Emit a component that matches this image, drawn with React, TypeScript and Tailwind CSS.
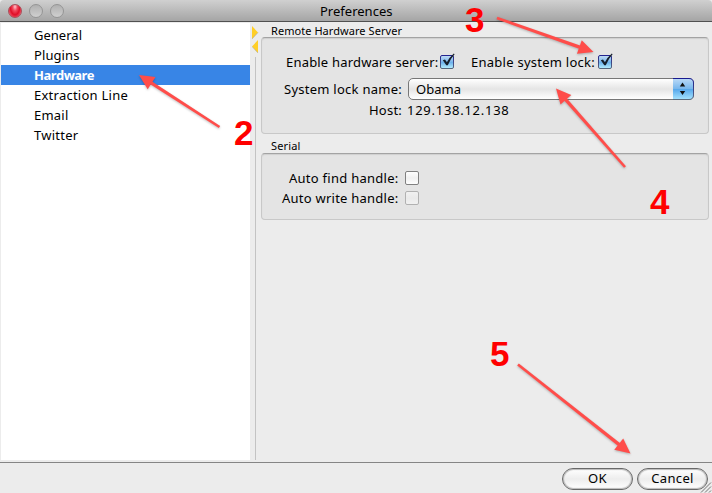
import { useLayoutEffect, useRef, useState } from "react";

const FONT = "font-['Noto_Sans','Open_Sans',sans-serif]";

// Text tracked so that it fills a given width.
function Label({ text, width, className = "" }: { text: string; width: number; className?: string }) {
  const ref = useRef<HTMLSpanElement>(null);
  const [tracking, setTracking] = useState(0);
  useLayoutEffect(() => {
    if (ref.current) {
      const natural = ref.current.getBoundingClientRect().width;
      setTracking((width - natural) / text.length);
    }
  }, [text, width]);
  return (
    <span className={className}>
      <span ref={ref} className="inline-block whitespace-nowrap" style={{ letterSpacing: `${tracking}px` }}>
        {text}
      </span>
    </span>
  );
}

const sections = [
  { name: "General", width: 48 },
  { name: "Plugins", width: 45.5 },
  { name: "Hardware", width: 60 },
  { name: "Extraction Line", width: 94 },
  { name: "Email", width: 34.5 },
  { name: "Twitter", width: 44.5 },
];

function Checkbox({ checked = false, disabled = false }: { checked?: boolean; disabled?: boolean }) {
  return (
    <svg className={`block h-[20px] w-[18px] shrink-0 ${disabled ? "opacity-50" : ""}`} viewBox="0 1 18 20">
      <defs>
        <linearGradient id="boxOn" x1="0" y1="0" x2="0" y2="1">
          <stop offset="0" stopColor="#c3ddf5" />
          <stop offset="0.45" stopColor="#83bbee" />
          <stop offset="0.5" stopColor="#68aeea" />
          <stop offset="1" stopColor="#b8f0ff" />
        </linearGradient>
        <linearGradient id="boxOff" x1="0" y1="0" x2="0" y2="1">
          <stop offset="0" stopColor="#ffffff" />
          <stop offset="0.5" stopColor="#f0f0f0" />
          <stop offset="1" stopColor="#ffffff" />
        </linearGradient>
        <linearGradient id="boxEdge" x1="0" y1="0" x2="0" y2="1">
          <stop offset="0" stopColor="#24248f" />
          <stop offset="1" stopColor="#56667c" />
        </linearGradient>
      </defs>
      <rect x="0.5" y="4.5" width="13" height="13" rx="1.5" fill={checked ? "url(#boxOn)" : "url(#boxOff)"} stroke={checked ? "url(#boxEdge)" : "#808080"} />
      {checked && <path d="M2.8 9.300 5 8.600 6.900 11.300Q9.500 6 13.800 2.400L14.600 3.200Q10.200 8 7.800 14.200H6.300Z" fill="#16202c" />}
    </svg>
  );
}

function Group({ title, width, className, children }: { title: string; width: number; className: string; children: React.ReactNode }) {
  return (
    <section>
      <h2 className="flex h-[15px] items-center pl-[10px] text-[11px] leading-[15px]">
        <Label text={title} width={width} />
      </h2>
      <div className={`rounded-[4px] border border-[#c8c8c8] border-t-[#a3a3a3] bg-[#e4e4e4] shadow-[inset_0_1px_1px_#cfcfcf] ${className}`}>{children}</div>
    </section>
  );
}

function PushButton({ text, width }: { text: string; width: number }) {
  return (
    <button className="flex h-[22px] w-[71px] items-center justify-center rounded-full border border-[#686868] bg-linear-to-b from-white via-[#ededed] via-50% to-white pb-[2px] shadow-[inset_0_0_1px_1px_#b9b9b9]">
      <Label text={text} width={width} />
    </button>
  );
}

const arrows = [
  { from: [219.5, 127], to: [139, 75] },
  { from: [497, 18], to: [593.5, 52] },
  { from: [625, 167], to: [556, 88.5] },
  { from: [518, 364.5], to: [630.5, 453.5] },
];

function Arrows() {
  return (
    <svg className="pointer-events-none absolute inset-0 h-[493px] w-[712px] drop-shadow-[0_1px_1px_rgba(0,0,0,0.25)]" viewBox="0 0 712 493">
      {arrows.map(({ from: [x1, y1], to: [x2, y2] }) => {
        const length = Math.hypot(x2 - x1, y2 - y1);
        const angle = (Math.atan2(y2 - y1, x2 - x1) * 180) / Math.PI;
        return (
          <g key={x1} transform={`translate(${x1} ${y1}) rotate(${angle})`} fill="#ff4d4a">
            <path d={`M0-1.3 ${length - 14}-1.7V1.7L0 1.3Z`} />
            <path d={`M${length} 0 ${length - 15}-7.2V7.2Z`} />
          </g>
        );
      })}
    </svg>
  );
}

const digit = "absolute font-['Liberation_Sans',sans-serif] text-[35px] leading-[40px] font-bold text-[#ff0000]";

export default function App() {
  return (
    <div className={`relative flex h-[493px] w-[712px] flex-col overflow-hidden bg-[#ececec] text-[13px] leading-[20px] text-black ${FONT}`}>
      <header className="grid h-[22px] shrink-0 grid-cols-[320px_1fr] items-center rounded-t-[4px] border-b border-[#515151] bg-linear-to-b from-[#d0d0d0] to-[#a5a5a5]">
        <div className="flex gap-[7px] pl-[8px]">
          <span className="size-[14px] rounded-full border border-[#a8505a] bg-[radial-gradient(ellipse_at_50%_15%,#ffc5cc_0%,#f2475b_28%,#df0f28_55%,#ff8292_100%)]" />
          <span className="size-[14px] rounded-full border border-[#959595] bg-linear-to-b from-[#b0b0b0] to-[#d0d0d0]" />
          <span className="size-[14px] rounded-full border border-[#959595] bg-linear-to-b from-[#b0b0b0] to-[#d0d0d0]" />
        </div>
        <h1 className="pt-px"><Label text="Preferences" width={72.5} /></h1>
      </header>

      <main className="flex h-[440px] shrink-0 pt-px pl-px">
        <ul className="h-[437px] w-[249px] bg-white pt-[2px]">
          {sections.map(({ name, width }) => (
            <li key={name} className={`h-[20px] pl-[33px] ${name === "Hardware" ? "bg-[#3885e6] font-bold text-white" : ""}`}>
              <Label text={name} width={width} />
            </li>
          ))}
        </ul>
        <div className="flex h-[437px] w-[11px] flex-col pt-[3px]">
          <svg className="ml-[2px] block h-[28px] w-[7px]" viewBox="0 0 7 28">
            <path d="M0 0 6 6.5 0 13Z" fill="#ffcf27" />
            <path d="M0 13 6 6.5" stroke="#aaa" strokeWidth="0.6" />
            <path d="M6 14V27L0 20.5Z" fill="#ffcf27" />
            <path d="M6 27 0 20.5" stroke="#aaa" strokeWidth="0.6" />
          </svg>
          <span className="mt-[3px] ml-[5px] w-px grow bg-[#c3c3c3]" />
        </div>
        <div className="flex w-[448px] flex-col">
          <Group title="Remote Hardware Server" width={131} className="-mt-px h-[97px] pt-[14px]">
            <div className="flex h-[20px]">
              <Label text="Enable hardware server:" width={152.500} className="w-[178px] shrink-0 pl-[24px]" />
              <Checkbox checked />
              <Label text="Enable system lock:" width={124} className="w-[140px] shrink-0 pl-[13px]" />
              <Checkbox checked />
            </div>
            <div className="mt-[6px] flex h-[22px] items-center">
              <Label text="System lock name:" width={118} className="w-[146px] shrink-0 pl-[22px]" />
              <div className="flex h-[22px] w-[286px] shrink-0 rounded-[5px] border border-[#777] bg-linear-to-b from-white via-[#e5e5e5] via-50% to-white">
                <Label text="Obama" width={45} className="grow pl-[7px]" />
                <svg className="-my-px -mr-px block h-[22px] w-[21px] shrink-0" viewBox="0 0 21 22">
                  <defs>
                    <linearGradient id="stepper" x1="0" y1="0" x2="0" y2="1">
                      <stop offset="0" stopColor="#bcdaf7" />
                      <stop offset="0.48" stopColor="#79b7ed" />
                      <stop offset="0.5" stopColor="#55a6ea" />
                      <stop offset="1" stopColor="#a7e4ff" />
                    </linearGradient>
                    <linearGradient id="stepperEdge" x1="0" y1="0" x2="0" y2="1">
                      <stop offset="0" stopColor="#191990" />
                      <stop offset="1" stopColor="#5c6b7c" />
                    </linearGradient>
                  </defs>
                  <path d="M0 .5H16Q20.500 .5 20.500 5V17Q20.500 21.500 16 21.500H0Z" fill="url(#stepper)" />
                  <path d="M0 .5H16Q20.500 .5 20.500 5V17Q20.500 21.500 16 21.500H0" fill="none" stroke="url(#stepperEdge)" />
                  <path d="M9.500 4.500 12.200 8.500H6.800ZM9.500 17 12.200 13H6.800Z" fill="#111" />
                </svg>
              </div>
            </div>
            <div className="flex h-[20px]">
              <Label text="Host:" width={33} className="w-[145px] shrink-0 pl-[107px]" />
              <Label text="129.138.12.138" width={102.500} />
            </div>
          </Group>
          <div className="mt-[4px]">
            <Group title="Serial" width={29.500} className="h-[67px] pt-[14px]">
              <div className="flex h-[20px]">
                <Label text="Auto find handle:" width={109.500} className="w-[143px] shrink-0 pl-[27px]" />
                <Checkbox />
              </div>
              <div className="flex h-[20px]">
                <Label text="Auto write handle:" width={116.500} className="w-[143px] shrink-0 pl-[20px]" />
                <Checkbox disabled />
              </div>
            </Group>
          </div>
        </div>
      </main>

      <footer className="flex h-[31px] shrink-0 justify-end gap-[4px] border-t border-[#858585] pt-[5px] pr-[4px]">
        <PushButton text="OK" width={19} />
        <PushButton text="Cancel" width={42.500} />
      </footer>

      <svg className="absolute right-0 bottom-0 h-[12px] w-[12px]" viewBox="0 0 12 12" stroke="#777" strokeWidth="1">
        <path d="M1 11.500 11 1.500M5 11.500 11 5.500M9 11.500 11 9.500" />
      </svg>
      <Arrows />
      <span className={`${digit} top-[113px] left-[234px]`}>2</span>
      <span className={`${digit} top-[0px] left-[465px]`}>3</span>
      <span className={`${digit} top-[182px] left-[650px]`}>4</span>
      <span className={`${digit} top-[334px] left-[490px]`}>5</span>
    </div>
  );
}
